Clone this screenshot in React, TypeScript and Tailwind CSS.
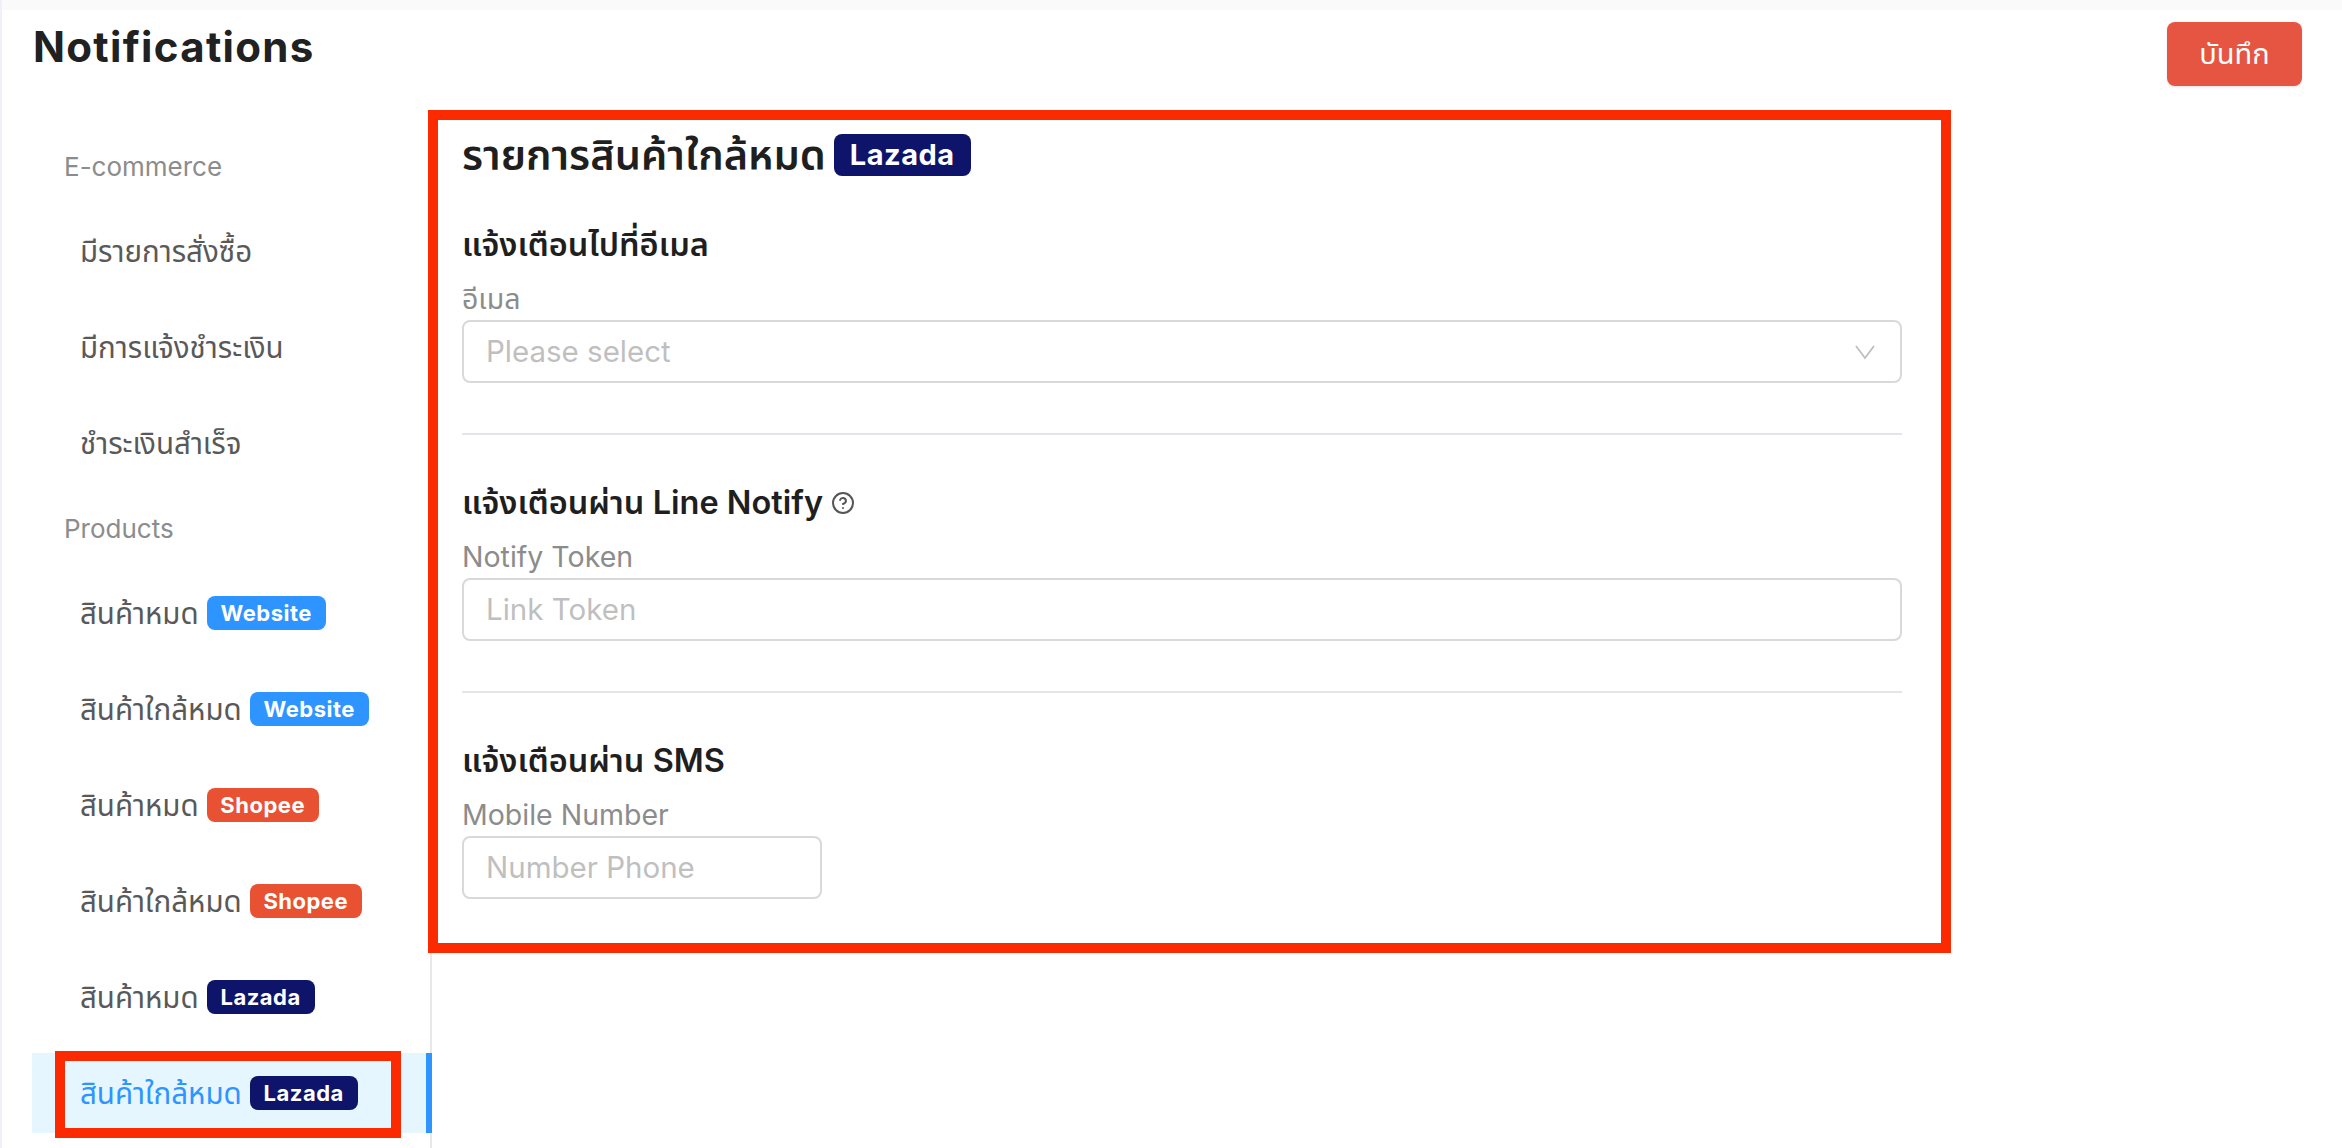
import { CircleHelp } from "lucide-react";

const FONT = "font-['Inter','Noto_Sans','Noto_Sans_Thai','DejaVu_Sans',sans-serif]";

type BadgeKind = "Website" | "Shopee" | "Lazada";

function Badge({ kind }: { kind: BadgeKind }) {
  const cls =
    kind === "Website"
      ? "bg-[#2e94ff] w-[119px]"
      : kind === "Shopee"
        ? "bg-[#e85232] w-[112px]"
        : "bg-[#0e1469] w-[108px]";
  return (
    <span className={`${cls} ml-[8px] inline-flex h-[34px] items-center justify-center rounded-lg text-[22px] font-bold tracking-[0.5px] text-white`}>
      {kind}
    </span>
  );
}

function Item({ text, badge }: { text: string; badge?: BadgeKind }) {
  return (
    <div className="mb-4 flex h-20 items-center pl-12 text-[29.5px] text-[#595959]">
      <span>{text}</span>
      {badge && <Badge kind={badge} />}
    </div>
  );
}

function GroupLabel({ text }: { text: string }) {
  return <div className="mb-4 flex h-[58px] items-center pl-8 text-[26px] text-[#8c8c8c]">{text}</div>;
}

function Field({ label, placeholder, narrow, chevron }: { label: string; placeholder: string; narrow?: boolean; chevron?: boolean }) {
  return (
    <div>
      <div className="mb-px text-[28.5px] leading-[40px] text-[#8c8c8c]">{label}</div>
      <div className={`flex h-[63px] items-center justify-between rounded-lg border-2 border-[#d9d9d9] pl-[22px] pr-6 text-[29.5px] text-[#bfbfbf] ${narrow ? "w-[360px]" : "w-full"}`}>
        <span>{placeholder}</span>
        {chevron && (
          <svg width="22" height="16" viewBox="0 0 22 16" fill="none" stroke="#bfbfbf" strokeWidth="1.8">
            <path d="M2 2 L11 14 L20 2" />
          </svg>
        )}
      </div>
    </div>
  );
}

function SectionTitle({ children }: { children: React.ReactNode }) {
  return <div className="mb-3 flex h-[44px] items-center gap-2 text-[32.5px] font-semibold text-[#1f1f1f]">{children}</div>;
}

export default function App() {
  return (
    <div className={`${FONT} flex h-[1148px] w-full overflow-hidden bg-white`}>
      <div className="w-[2px] shrink-0 bg-[#f0f0f8]" />
      <div className="flex min-w-0 flex-1 flex-col">
        <div className="h-[10px] shrink-0 bg-[#fafafa]" />
        <header className="flex h-[100px] shrink-0 items-start justify-between pl-[31px] pr-[40px] pt-3">
          <h1 className="text-[42px] font-bold leading-[50px] tracking-[1.3px] text-[#212121]">Notifications</h1>
          <button className="h-16 w-[135px] rounded-lg bg-[#e55541] text-[29px] text-white shadow-sm">บันทึก</button>
        </header>
        <div className="flex flex-1">
          <aside className="w-[430px] shrink-0 border-r-2 border-[#e8e8e8] pl-[30px] pt-[27px]">
            <GroupLabel text="E-commerce" />
            <Item text="มีรายการสั่งซื้อ" />
            <Item text="มีการแจ้งชำระเงิน" />
            <Item text="ชำระเงินสำเร็จ" />
            <GroupLabel text="Products" />
            <Item text="สินค้าหมด" badge="Website" />
            <Item text="สินค้าใกล้หมด" badge="Website" />
            <Item text="สินค้าหมด" badge="Shopee" />
            <Item text="สินค้าใกล้หมด" badge="Shopee" />
            <Item text="สินค้าหมด" badge="Lazada" />
            <div className="relative -mr-[2px] flex h-20 items-center border-r-[6px] border-[#2e94ff] bg-[#e6f6ff] pl-12 text-[29.5px] text-[#2e94ff]">
              <span>สินค้าใกล้หมด</span>
              <Badge kind="Lazada" />
              <div className="pointer-events-none absolute -top-[2px] left-[23px] h-[87px] w-[346px] border-[10px] border-[#fb2a00]" />
            </div>
          </aside>
          <section className="relative -ml-[4px] h-[843px] w-[1523px] shrink-0 border-[10px] border-[#fb2a00] bg-white pl-[24px] pr-[39px] pt-[14px]">
            <div className="mb-[47px] flex h-[42px] items-center text-[41.5px] font-semibold text-[#1f1f1f]">
              <span>รายการสินค้าใกล้หมด</span>
              <span className="ml-2 inline-flex h-[42px] w-[137px] items-center justify-center rounded-lg bg-[#0e1469] text-[29px] font-bold tracking-[0.5px] text-white">Lazada</span>
            </div>
            <SectionTitle>แจ้งเตือนไปที่อีเมล</SectionTitle>
            <Field label="อีเมล" placeholder="Please select" chevron />
            <div className="mb-[46px] mt-[50px] h-[2px] bg-[#e4e4ea]" />
            <SectionTitle>
              แจ้งเตือนผ่าน Line Notify
              <CircleHelp size={24} strokeWidth={2} className="text-[#555555]" />
            </SectionTitle>
            <Field label="Notify Token" placeholder="Link Token" />
            <div className="mb-[46px] mt-[50px] h-[2px] bg-[#e4e4ea]" />
            <SectionTitle>แจ้งเตือนผ่าน SMS</SectionTitle>
            <Field label="Mobile Number" placeholder="Number Phone" narrow />
          </section>
        </div>
      </div>
    </div>
  );
}
